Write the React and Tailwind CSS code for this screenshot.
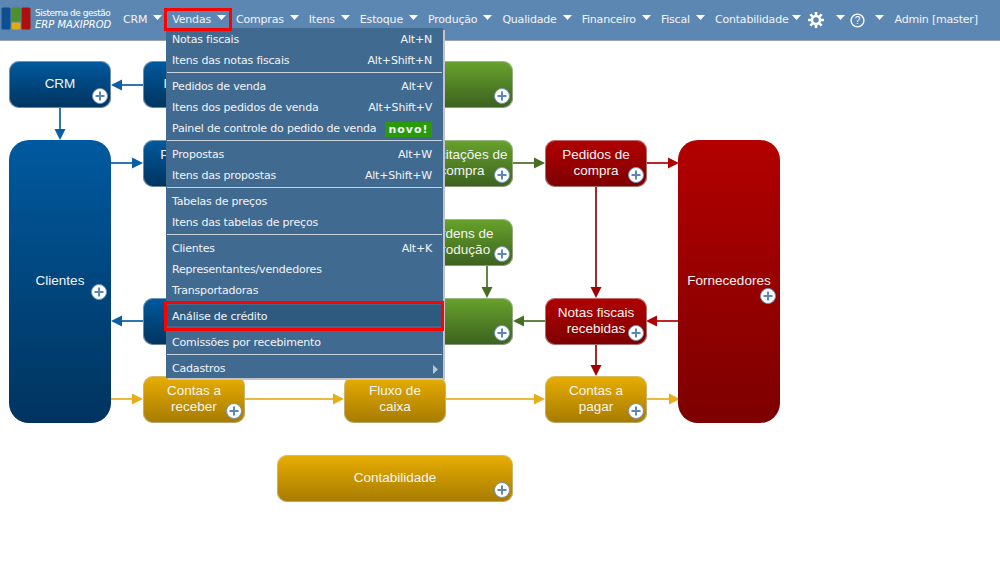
import React from 'react';

const navItems = ['CRM', 'Vendas', 'Compras', 'Itens', 'Estoque', 'Produção', 'Qualidade', 'Financeiro', 'Fiscal', 'Contabilidade'];

const menu = [
  [['Notas fiscais', 'Alt+N'], ['Itens das notas fiscais', 'Alt+Shift+N']],
  [['Pedidos de venda', 'Alt+V'], ['Itens dos pedidos de venda', 'Alt+Shift+V'], ['Painel de controle do pedido de venda', null, 'novo']],
  [['Propostas', 'Alt+W'], ['Itens das propostas', 'Alt+Shift+W']],
  [['Tabelas de preços'], ['Itens das tabelas de preços']],
  [['Clientes', 'Alt+K'], ['Representantes/vendedores'], ['Transportadoras']],
  [['Análise de crédito', null, 'active']],
  [['Comissões por recebimento']],
  [['Cadastros', null, 'sub']],
];

const tones = {
  blue: 'bg-gradient-to-b from-[#005a9f] to-[#00345f]',
  green: 'bg-gradient-to-b from-[#68a32b] to-[#3c611f]',
  red: 'bg-gradient-to-b from-[#b30000] to-[#7d0000]',
  gold: 'bg-gradient-to-b from-[#e9ae00] to-[#a67b00]',
};

const nodes = [
  { x: 9, y: 61, w: 102, tone: 'blue', label: 'CRM' },
  { x: 143, y: 61, w: 102, tone: 'blue', label: 'Propostas' },
  { x: 411, y: 61, w: 102, tone: 'green', label: '' },
  { x: 143, y: 140, w: 102, tone: 'blue', label: 'Pedidos de\nvenda' },
  { x: 411, y: 140, w: 102, tone: 'green', label: 'Solicitações de\ncompra' },
  { x: 545, y: 140, w: 102, tone: 'red', label: 'Pedidos de\ncompra' },
  { x: 411, y: 219, w: 102, tone: 'green', label: 'Ordens de\nprodução' },
  { x: 143, y: 298, w: 102, tone: 'blue', label: '' },
  { x: 411, y: 298, w: 102, tone: 'green', label: '' },
  { x: 545, y: 298, w: 102, tone: 'red', label: 'Notas fiscais\nrecebidas' },
  { x: 143, y: 376, w: 102, tone: 'gold', label: 'Contas a\nreceber' },
  { x: 344, y: 376, w: 102, tone: 'gold', label: 'Fluxo de\ncaixa', noPlus: true },
  { x: 545, y: 376, w: 102, tone: 'gold', label: 'Contas a\npagar' },
  { x: 277, y: 455, w: 236, tone: 'gold', label: 'Contabilidade' },
];

// x1,y1 -> x2,y2, the head sits at the second point
const arrows = [
  [143, 85, 111, 85, '#0a5ea6'],
  [60, 108, 60, 140, '#0a5ea6'],
  [111, 163, 143, 163, '#0a5ea6'],
  [143, 321, 111, 321, '#0a5ea6'],
  [513, 163, 545, 163, '#466f25'],
  [487, 266, 487, 298, '#466f25'],
  [545, 321, 513, 321, '#466f25'],
  [647, 163, 679, 163, '#b00000'],
  [596, 187, 596, 298, '#a00000'],
  [678, 321, 646, 321, '#b00000'],
  [596, 345, 596, 376, '#a00000'],
  [111, 399, 143, 399, '#e8ae1a'],
  [245, 399, 344, 399, '#e8ae1a'],
  [446, 399, 545, 399, '#e8ae1a'],
  [647, 399, 680, 399, '#e8ae1a'],
];

const Caret = () => (
  <svg width="9" height="5" viewBox="0 0 9 5" className="mb-[5px] shrink-0">
    <path d="M0 0h9L4.5 5z" fill="#fff" />
  </svg>
);

const PlusBadge = ({ className }) => (
  <span className={`absolute flex h-4 w-4 items-center justify-center rounded-full border border-[#7396bd] bg-white ${className}`}>
    <svg width="10" height="10" viewBox="0 0 10 10">
      <path d="M5 0.5v9M0.5 5h9" stroke="#5c88b6" strokeWidth="2" />
    </svg>
  </span>
);

const FlowNode = ({ x, y, w, tone, label, noPlus }) => (
  <div
    className={`absolute flex h-[47px] items-center justify-center whitespace-pre-line rounded-[10px] text-center font-['Liberation_Sans',sans-serif] text-[13.5px] leading-[16px] tracking-normal text-[#f4f4f4] shadow-[inset_0_0_0_1px_rgba(200,200,200,0.55)] ${tones[tone]}`}
    style={{ left: x, top: y, width: w }}
  >
    <span className="-mt-px">{label}</span>
    {!noPlus && <PlusBadge className="right-[3px] bottom-[4px]" />}
  </div>
);

const TallNode = ({ x, tone, label, plusClass }) => (
  <div
    className={`absolute flex h-[283px] w-[102px] items-center justify-center rounded-[20px] font-['Liberation_Sans',sans-serif] text-[13.5px] tracking-normal text-[#f4f4f4] ${tones[tone]}`}
    style={{ left: x, top: 140 }}
  >
    <span className="-mt-px">{label}</span>
    <PlusBadge className={plusClass} />
  </div>
);

const Arrow = ({ from }) => {
  const [x1, y1, x2, y2, color] = from;
  const dx = Math.sign(x2 - x1);
  const dy = Math.sign(y2 - y1);
  const bx = x2 - dx * 11;
  const by = y2 - dy * 11;
  const head = `${x2},${y2} ${bx - dy * 5.5},${by - dx * 5.5} ${bx + dy * 5.5},${by + dx * 5.5}`;
  return (
    <g>
      <line x1={x1} y1={y1} x2={bx} y2={by} stroke={color} strokeWidth="2" strokeOpacity="0.85" />
      <polygon points={head} fill={color} />
    </g>
  );
};

const Logo = () => (
  <svg width="30" height="23" viewBox="0 0 30 23" className="mt-[-3px] shrink-0">
    <rect x="0.5" y="0.5" width="9" height="22" rx="1.5" fill="#0d4f8f" />
    <rect x="10.5" y="0.5" width="9" height="14" rx="1" fill="#4f8f2a" />
    <rect x="10.5" y="15.5" width="9" height="7" rx="1" fill="#e2aa10" />
    <rect x="20.5" y="0.5" width="9" height="22" rx="1.5" fill="#b00d0d" />
  </svg>
);

const Gear = () => (
  <svg width="16" height="16" viewBox="0 0 16 16" className="-ml-[3px]">
    <circle cx="8" cy="8" r="4" fill="none" stroke="#fff" strokeWidth="2.6" />
    <path d="M8 0v3M8 13v3M0 8h3M13 8h3M2.3 2.3l2.1 2.1M11.6 11.6l2.1 2.1M2.3 13.7l2.1-2.1M11.6 4.4l2.1-2.1" stroke="#fff" strokeWidth="2.6" />
  </svg>
);

const Help = () => (
  <svg width="15" height="15" viewBox="0 0 15 15">
    <circle cx="7.5" cy="7.5" r="6.4" fill="none" stroke="#fff" strokeWidth="1.4" />
    <text x="7.5" y="11" textAnchor="middle" fontSize="10" fontFamily="Liberation Sans" fill="#fff">?</text>
  </svg>
);

const MenuRow = ({ row }) => {
  const [label, shortcut, kind] = row;
  return (
    <div className={`flex h-[21px] items-center justify-between pl-[6px] pr-[11px] pt-[3px] ${kind === 'active' ? 'bg-[#2f5a80]' : ''}`}>
      <span>{label}</span>
      {shortcut && <span>{shortcut}</span>}
      {kind === 'novo' && (
        <span className="flex h-[15px] w-[47px] items-center justify-center bg-[#2a9a0a] text-[11px] font-bold tracking-[1px] leading-none">novo!</span>
      )}
      {kind === 'sub' && (
        <svg width="5" height="9" viewBox="0 0 5 9" className="-mr-[6px]"><path d="M0 0l5 4.5L0 9z" fill="#b9c6d3" /></svg>
      )}
    </div>
  );
};

export default function App() {
  return (
    <div className="relative h-[568px] w-[1000px] overflow-hidden bg-white font-['DejaVu_Sans',sans-serif] text-[11px] tracking-[-0.19px] text-[#f2f5f8]">
      <header className="flex h-[41px] items-center border-b border-[#9aa5b0] bg-[#5d87b3]">
        <div className="flex w-[123px] items-center gap-[4px] pl-px">
          <Logo />
          <div className="-mt-[3px] leading-[12px]">
            <div className="text-[9px] font-medium tracking-[-0.5px] text-white">Sistema de gestão</div>
            <div className="text-[10px] italic tracking-normal text-white">ERP MAXIPROD</div>
          </div>
        </div>
        <nav className="flex flex-1 items-center">
          {navItems.map((item) => (
            <div key={item} className={`mr-[10px] flex items-center ${item === 'Contabilidade' ? 'gap-[3px]' : 'gap-[6px]'}`}>
              <span>{item}</span>
              <Caret />
            </div>
          ))}
          <Gear />
          <span className="ml-[12px] flex"><Caret /></span>
          <span className="ml-[5px] flex"><Help /></span>
          <span className="ml-[10px] flex"><Caret /></span>
          <span className="ml-[11px]">Admin [master]</span>
        </nav>
      </header>

      <div className="absolute inset-0 top-[41px]">
        <svg width="1000" height="568" className="absolute left-0 top-[-41px]">
          {arrows.map((a, i) => <Arrow key={i} from={a} />)}
        </svg>
        <div className="absolute left-0 top-[-41px]">
          {nodes.map((n) => <FlowNode key={`${n.x}-${n.y}`} {...n} />)}
          <TallNode x={9} tone="blue" label="Clientes" plusClass="right-[4px] top-[144px]" />
          <TallNode x={678} tone="red" label="Fornecedores" plusClass="right-[4px] top-[148px]" />
        </div>
      </div>

      <div className="absolute left-[166px] top-[28px] w-[277px] bg-[#416a91] shadow-[2px_2px_0_0_#c4c4c4]">
        {menu.map((group, i) => (
          <div key={i}>
            {i > 0 && <div className="mx-px my-[2px] h-px bg-[#c9d3dd]" />}
            {group.map((row) => <MenuRow key={row[0]} row={row} />)}
          </div>
        ))}
      </div>

      <div className="absolute left-[164px] top-[8px] h-[23px] w-[68px] border-[3px] border-[#ff0000]" />
      <div className="absolute left-[164px] top-[301px] h-[30px] w-[280px] border-[3px] border-[#ff0000]" />
    </div>
  );
}
